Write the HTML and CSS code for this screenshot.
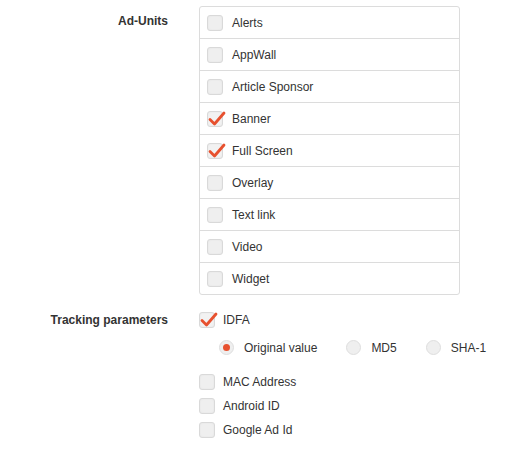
FILE: index.html
```html
<!DOCTYPE html>
<html>
<head>
<meta charset="utf-8">
<link rel="stylesheet" href="styles.css">
</head>
<body>
<div class="form">
  <div class="row">
    <div class="label label-units">Ad-Units</div>
    <div class="units">
      <div class="unit"><span class="cb"></span><span>Alerts</span></div>
      <div class="unit"><span class="cb"></span><span>AppWall</span></div>
      <div class="unit"><span class="cb"></span><span>Article Sponsor</span></div>
      <div class="unit"><span class="cb checked"><svg class="tick" viewBox="0 0 20 20"><path d="M3 10.5 L7.5 15 L17 4"/></svg></span><span>Banner</span></div>
      <div class="unit"><span class="cb checked"><svg class="tick" viewBox="0 0 20 20"><path d="M3 10.5 L7.5 15 L17 4"/></svg></span><span>Full Screen</span></div>
      <div class="unit"><span class="cb"></span><span>Overlay</span></div>
      <div class="unit"><span class="cb"></span><span>Text link</span></div>
      <div class="unit"><span class="cb"></span><span>Video</span></div>
      <div class="unit"><span class="cb"></span><span>Widget</span></div>
    </div>
  </div>
  <div class="row row-track">
    <div class="label label-track">Tracking parameters</div>
    <div class="track">
      <div class="opt"><span class="cb checked"><svg class="tick" viewBox="0 0 20 20"><path d="M3 10.5 L7.5 15 L17 4"/></svg></span><span>IDFA</span></div>
      <div class="radios">
        <div class="radio-item"><span class="rb on"></span><span>Original value</span></div>
        <div class="radio-item"><span class="rb"></span><span>MD5</span></div>
        <div class="radio-item"><span class="rb"></span><span>SHA-1</span></div>
      </div>
      <div class="opt opt-first"><span class="cb"></span><span>MAC Address</span></div>
      <div class="opt opt-next"><span class="cb"></span><span>Android ID</span></div>
      <div class="opt opt-next"><span class="cb"></span><span>Google Ad Id</span></div>
    </div>
  </div>
</div>
</body>
</html>
```
FILE: styles.css
```css
html, body {
  margin: 0;
  padding: 0;
  background: #fff;
}
body {
  font-family: "Liberation Sans", Arial, sans-serif;
  font-size: 12px;
  color: #333;
}
.form {
  padding-top: 6px;
}
.row {
  display: grid;
  grid-template-columns: 168px 261px;
  column-gap: 31px;
  align-items: start;
}
.label {
  text-align: right;
  font-weight: bold;
  line-height: 14px;
  color: #333;
  white-space: nowrap;
}
.label-units {
  padding-top: 8px;
}
.label-track {
  padding-top: 1px;
}
.units {
  border: 1px solid #dcdcdc;
  border-radius: 3px;
}
.unit {
  height: 31px;
  display: flex;
  align-items: center;
  padding-left: 7px;
  gap: 9px;
  border-bottom: 1px solid #dcdcdc;
}
.unit:last-child {
  border-bottom: none;
}
.cb {
  position: relative;
  box-sizing: border-box;
  width: 16px;
  height: 16px;
  border: 1px solid #d9d9d9;
  border-radius: 3px;
  background: #efefef;
  box-shadow: inset 0 0 2px rgba(0,0,0,0.06);
  flex: none;
}
.cb.checked {
  background: #f2f2f2;
}
.tick {
  position: absolute;
  left: -1px;
  top: -3px;
  width: 20px;
  height: 20px;
  overflow: visible;
}
.tick path {
  fill: none;
  stroke: #e7512f;
  stroke-width: 2.8;
  stroke-linecap: round;
  stroke-linejoin: round;
}
.row-track {
  margin-top: 17px;
  grid-template-columns: 168px auto;
}
.track {
  display: flex;
  flex-direction: column;
  white-space: nowrap;
}
.opt {
  display: flex;
  align-items: center;
  gap: 8px;
  height: 16px;
  line-height: 16px;
}
.radios {
  display: flex;
  align-items: center;
  gap: 29px;
  margin-top: 12px;
  padding-left: 20px;
  height: 15px;
}
.radio-item {
  display: flex;
  align-items: center;
  gap: 10px;
}
.rb {
  position: relative;
  box-sizing: border-box;
  width: 15px;
  height: 15px;
  border-radius: 50%;
  border: 1px solid #dedede;
  background: #efefef;
  flex: none;
}
.rb.on::after {
  content: "";
  position: absolute;
  left: 3px;
  top: 3px;
  width: 7px;
  height: 7px;
  border-radius: 50%;
  background: #e7512f;
}
.opt-first {
  margin-top: 19px;
}
.opt-next {
  margin-top: 8px;
}
```
